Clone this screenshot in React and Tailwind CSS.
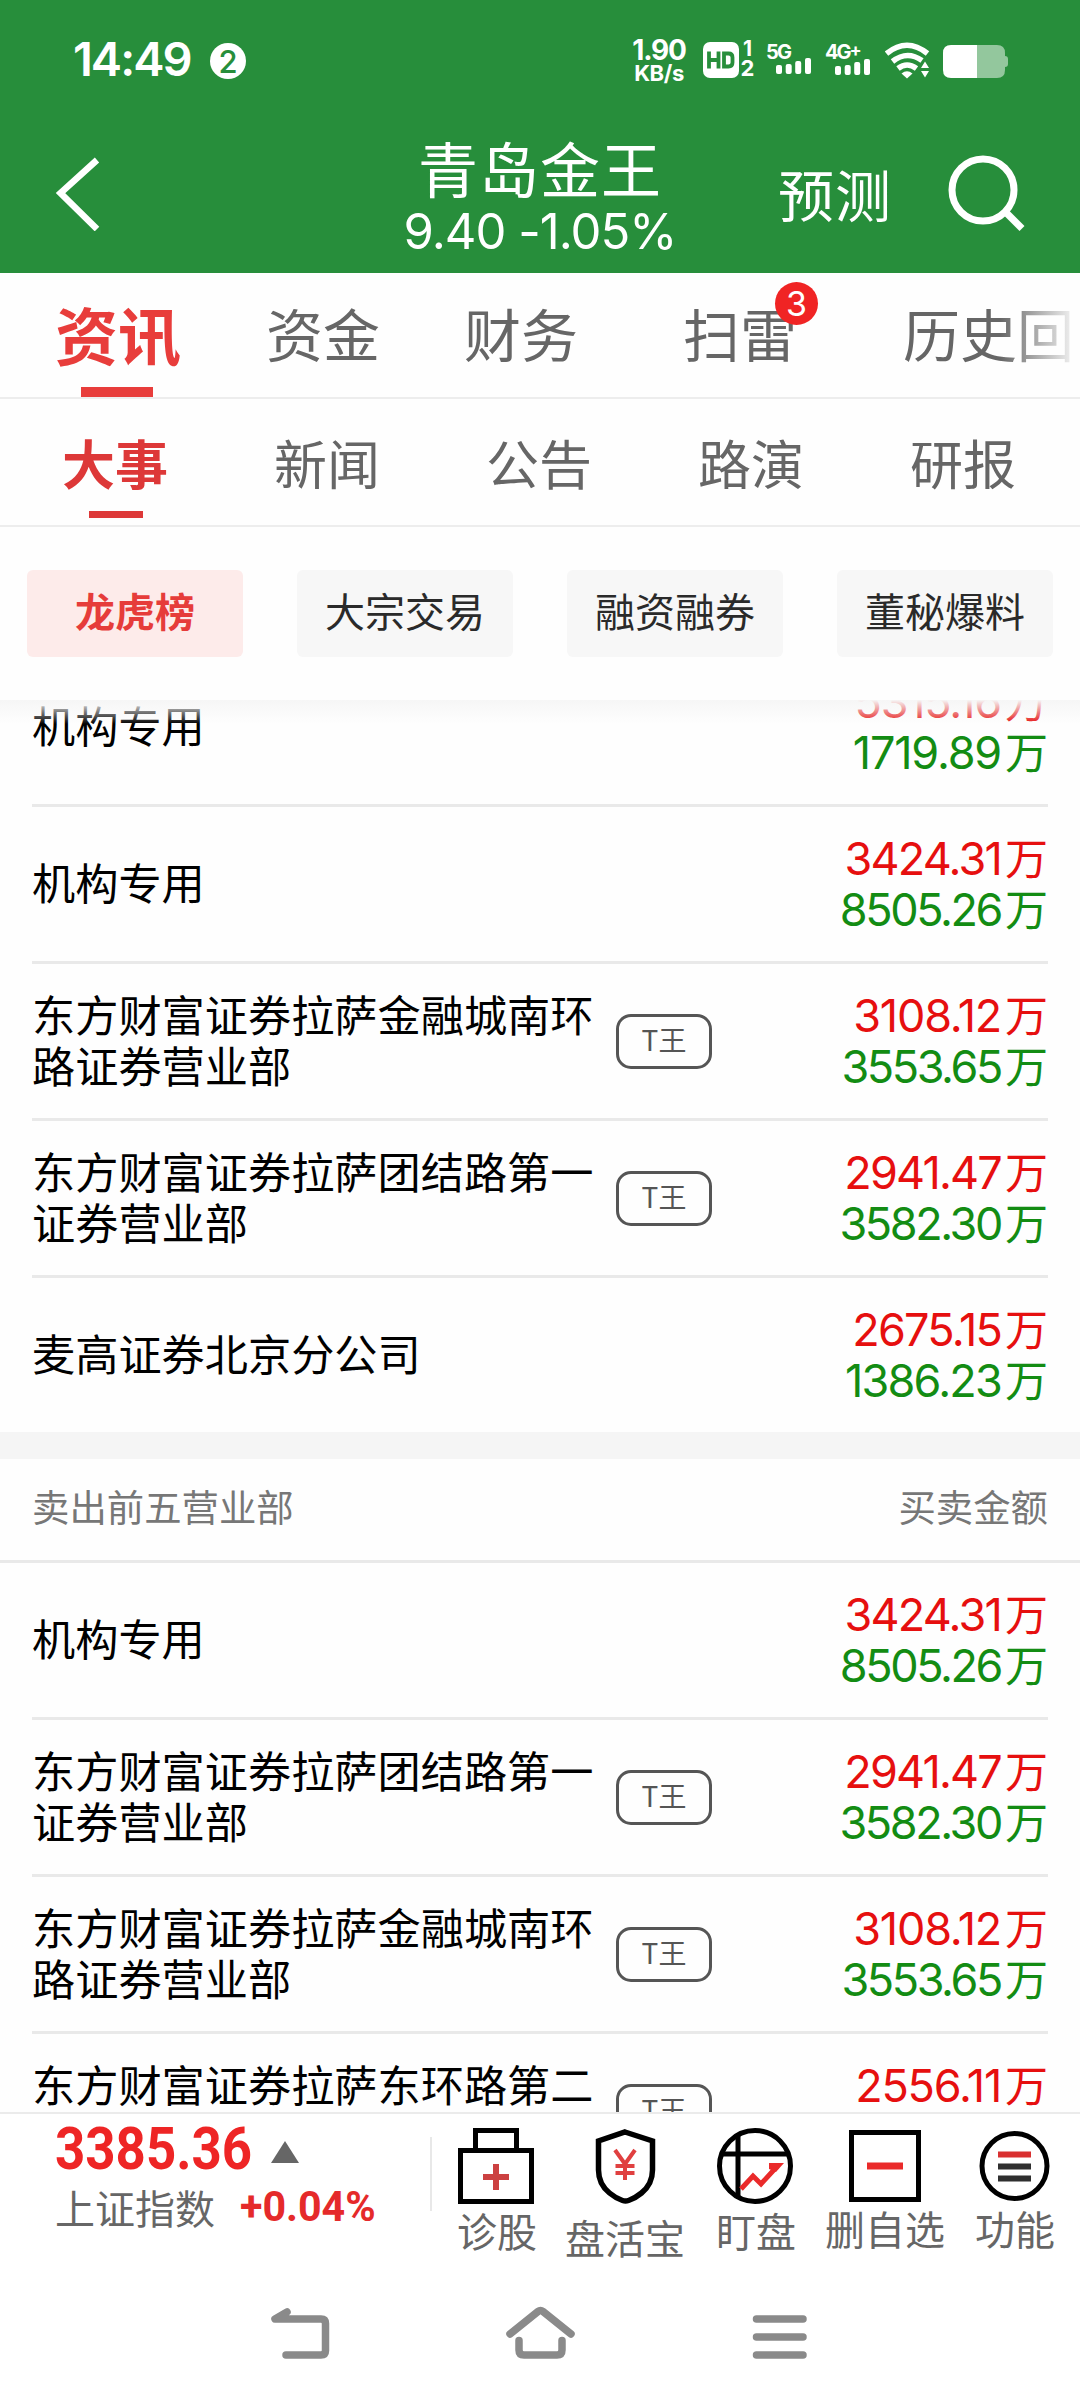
import { useState } from "react";

const mainTabs = [
  { name: "资讯", style: "w-[127px]" },
  { name: "资金", style: "ml-[84px]" },
  { name: "财务", style: "ml-[84px]" },
  { name: "扫雷", style: "ml-[105px]", badge: 3 },
  { name: "历史回", style: "ml-[106px]" },
];
const subTabs = ["大事", "新闻", "公告", "路演", "研报"];
const filters = ["龙虎榜", "大宗交易", "融资融券", "董秘爆料"];

const buyList = [
  { name: "机构专用", buy: "5315.16", sell: "1719.89" },
  { name: "机构专用", buy: "3424.31", sell: "8505.26" },
  { name: "东方财富证券拉萨金融城南环路证券营业部", tag: "T王", buy: "3108.12", sell: "3553.65" },
  { name: "东方财富证券拉萨团结路第一证券营业部", tag: "T王", buy: "2941.47", sell: "3582.30" },
  { name: "麦高证券北京分公司", buy: "2675.15", sell: "1386.23" },
];
const sellList = [
  { name: "机构专用", buy: "3424.31", sell: "8505.26" },
  { name: "东方财富证券拉萨团结路第一证券营业部", tag: "T王", buy: "2941.47", sell: "3582.30" },
  { name: "东方财富证券拉萨金融城南环路证券营业部", tag: "T王", buy: "3108.12", sell: "3553.65" },
  { name: "东方财富证券拉萨东环路第二证券营业部", tag: "T王", buy: "2556.11", sell: "2482.07" },
];

const Signal = () => (
  <svg width="36" height="16" viewBox="0 0 36 16" fill="currentColor">
    <rect x="0" y="7" width="6" height="9" rx="2" />
    <rect x="9.7" y="6" width="6" height="10" rx="2" />
    <rect x="19.2" y="3" width="6" height="13" rx="2" />
    <rect x="29" y="0" width="6" height="16" rx="2" />
  </svg>
);

const StatusBar = () => (
  <div className="flex h-[118px] items-start pl-[73px] font-['Inter'] text-white">
    <span className="mt-[30px] w-[121px] text-[47px] leading-[58px] font-semibold tracking-[-2px]">14:49</span>
    <span className="mt-[43px] ml-[16px] flex h-[36px] w-[36px] items-center justify-center rounded-full bg-white text-[31px] leading-none font-medium text-[#278e3b]">
      2
    </span>
    <div className="mt-[38px] ml-[384px] w-[58px] text-center font-bold">
      <div className="text-[28px] leading-[24px] tracking-[-1.2px]">1.90</div>
      <div className="text-[22px] leading-[22px] tracking-[-0.4px]">KB/s</div>
    </div>
    <svg className="mt-[42px] ml-[15px]" width="36" height="36" viewBox="0 0 36 36">
      <rect width="36" height="36" rx="7" fill="#fff" />
      <g fill="none" stroke="#278e3b" strokeWidth="3.8">
        <path d="M6 9.500v17M15.500 9.500v17M6 18h9.500M21 11.500h4.500q4 0 4 4v5q0 4-4 4h-4.500z" />
      </g>
    </svg>
    <div className="mt-[38px] ml-[1px] w-[15px] text-center text-[21px] leading-[21px] font-bold">
      <div>1</div>
      <div className="-mt-[1px] text-[22px]">2</div>
    </div>
    <div className="mt-[43px] ml-[11px] w-[45px] text-[20px] leading-[18px] font-bold tracking-[-1.7px]">
      5G
      <div className="-mt-[3px] ml-[10px]"><Signal /></div>
    </div>
    <div className="mt-[43px] ml-[14px] w-[45px] text-[20px] leading-[18px] font-bold tracking-[-2px] whitespace-nowrap">
      4G<span className="relative -top-[3px] text-[18px]">+</span>
      <div className="-mt-[3px] ml-[10px]"><Signal /></div>
    </div>
    <svg className="mt-[42px] ml-[15px]" width="46" height="38" viewBox="0 0 46 38" fill="none" stroke="#fff" strokeWidth="5.500">
      <path d="M1.500 11.500q20.500-16.500 41 0M7.500 19.500q14.500-11.500 29.500-1M13 26.500q9-7 18.500 0" />
      <path d="M16.500 31.500q5.500-4.500 11 0l-5.500 5z" fill="#fff" stroke="none" />
      <path d="M36 26l4-6.500 4 6.500zM36 29l4 6.500 4-6.500z" fill="#fff" stroke="none" />
    </svg>
    <svg className="mt-[45px] ml-[12px]" width="67" height="33" viewBox="0 0 67 33" fill="#fff">
      <path d="M34 0h20q8 0 8 8v3q3 0 3 3v5q0 3-3 3v3q0 8-8 8h-20z" opacity="0.5" />
      <path d="M34 0h-26q-8 0-8 8v17q0 8 8 8h26z" />
    </svg>
  </div>
);

const Header = () => (
  <div className="flex h-[155px] items-start text-white">
    <svg className="mt-[37px] ml-[52px]" width="52" height="76" viewBox="0 0 52 76" fill="none" stroke="#fff" strokeWidth="6.500">
      <path d="M45 5L8.500 38L45 74" />
    </svg>
    <div className="ml-[298px] mt-[16px] w-[276px] text-center whitespace-nowrap">
      <div className="text-[60px] leading-[66px] tracking-[1px]">青岛金王</div>
      <div className="mt-[8px] font-['Inter'] text-[49px] leading-[48px] tracking-[-1px]">9.40 -1.05%</div>
    </div>
    <div className="mt-[40px] ml-[100px] text-[56px] leading-[70px] tracking-[1px]">预测</div>
    <svg className="mt-[36px] ml-[56px]" width="82" height="82" viewBox="0 0 82 82" fill="none" stroke="#fff" strokeWidth="7">
      <circle cx="35" cy="36" r="31" />
      <path d="M56.500 57L74 74.500" />
    </svg>
  </div>
);

const Amount = ({ value, color }) => {
  // the "1" is a narrow glyph, so values with more of them are set looser
  const ones = value.split("1").length - 1;
  return (
    <div className={`h-[51px] whitespace-nowrap ${color}`}>
      <span
        className="font-['Inter'] text-[45px] leading-[51px]"
        style={{ letterSpacing: `${-2.4 + ones * 0.6}px` }}
      >
        {value}
      </span>
      <span className="ml-[4px] text-[43px] leading-[51px]">万</span>
    </div>
  );
};

const Row = ({ item, last }) => (
  <div
    className={`mx-[32px] flex shrink-0 items-center border-[#e9e9e9] ${
      last ? "h-[154px]" : "h-[157px] border-b-[3px]"
    }`}
  >
    <div className="w-[563px] shrink-0 pb-[5px] text-[43.2px] leading-[51px] break-all text-black">{item.name}</div>
    {item.tag && (
      <span className="ml-[21px] flex h-[55px] w-[96px] items-center justify-center rounded-[15px] border-[3px] border-[#555] pb-[5px] text-[28px] leading-none text-[#555]">
        {item.tag}
      </span>
    )}
    <div className="ml-auto flex flex-col items-end pb-[4px]">
      <Amount value={item.buy} color="text-[#e60f0f]" />
      <Amount value={item.sell} color="text-[#138c13]" />
    </div>
  </div>
);

const BottomBar = () => (
  <div className="flex h-[152px] items-start border-t-2 border-[#ebebeb] bg-white text-[40px] leading-[44px] text-[#666]">
    <div className="w-[375px] pl-[55px]">
      <div className="mt-[9px] flex h-[52px] items-center">
        <span className="inline-block w-[216px] origin-left scale-x-[0.88] font-['Roboto'] text-[60px] leading-[52px] font-bold text-[#ee2525]">
          3385.36
        </span>
        <svg className="mt-[6px]" width="28" height="22" viewBox="0 0 28 22" fill="#666">
          <path d="M14 0L28 22H0z" />
        </svg>
      </div>
      <div className="mt-[9px] flex h-[46px] items-center whitespace-nowrap">
        <span className="text-[40px]">上证指数</span>
        <span className="ml-[25px] inline-block origin-left scale-x-[0.98] font-['Roboto'] text-[42px] font-bold text-[#e52a2a]">
          +0.04%
        </span>
      </div>
    </div>
    <div className="mt-[23px] ml-[55px] h-[74px] w-[2px] bg-[#e8e8e8]" />
    <div className="mt-[14px] ml-[26px] w-[80px]">
      <svg width="76" height="76" viewBox="0 0 76 76" fill="none" stroke="#000" strokeWidth="5">
        <path d="M2.500 22.500h71v51h-71zM17.500 22.500v-20h41v20" />
        <path d="M25 49h26M38 36v26" stroke="#cc4141" strokeWidth="6" />
      </svg>
      <div className="-ml-[1px] mt-[4px]">诊股</div>
    </div>
    <div className="mt-[14px] ml-[27px] flex w-[120px] flex-col items-center">
      <svg width="62" height="76" viewBox="0 0 62 76" fill="none" stroke="#000" strokeWidth="5.500">
        <path d="M31 4L58.500 13v29q0 14-11 23-6 5-13 7.500-3 1-6 0-7-2.500-13-7.500-11-9-11-23V13z" />
        <path d="M21 22l10 14 10-14M31 36v16M21.500 38h19M21.500 45h19" stroke="#e04040" strokeWidth="4" />
      </svg>
      <div className="mt-[11px]">盘活宝</div>
    </div>
    <div className="mt-[14px] ml-[32px] w-[80px]">
      <svg width="76" height="76" viewBox="0 0 76 76" fill="none" stroke="#000" strokeWidth="5">
        <circle cx="38" cy="38" r="35.500" />
        <path d="M21 6v64M5 26h66" />
        <path d="M24 61L36 48L44 56L60 38.500" stroke="#ea2a2a" strokeWidth="5" />
        <path d="M52 35h15l-8 9-7-3z" fill="#ea2a2a" stroke="none" />
      </svg>
      <div className="-ml-[1px] mt-[4px]">盯盘</div>
    </div>
    <div className="mt-[16px] ml-[28px] flex w-[120px] flex-col items-center">
      <svg width="72" height="72" viewBox="0 0 72 72" fill="none" stroke="#000" strokeWidth="5">
        <path d="M2.500 2.500h67v67h-67z" />
        <path d="M18 36h36" stroke="#ea2a2a" strokeWidth="7" />
      </svg>
      <div className="mt-[4px]">删自选</div>
    </div>
    <div className="mt-[16px] ml-[30px] w-[80px]">
      <svg className="ml-[4px]" width="72" height="72" viewBox="0 0 72 72" fill="none" stroke="#000" strokeWidth="5">
        <circle cx="35.500" cy="36" r="32.500" />
        <path d="M19 24.500h33" stroke="#d93030" strokeWidth="6" />
        <path d="M19 36.500h33M19 48.500h33" stroke="#2f2f2f" strokeWidth="6" />
      </svg>
      <div className="mt-[4px]">功能</div>
    </div>
  </div>
);

const SystemNav = () => (
  <div className="flex h-[136px] items-start justify-between bg-white pr-[271px] pl-[269px] pt-[40px]">
    <svg width="64" height="60" viewBox="0 0 64 60" fill="none" stroke="#8a8a8a" strokeWidth="7.500" strokeLinecap="round" strokeLinejoin="round">
      <path d="M18 8L6 15H52q4.500 0 4.500 4.500V46.500q0 4.500-4.500 4.500H17" />
    </svg>
    <svg width="72" height="60" viewBox="0 0 72 60" fill="none" stroke="#8a8a8a" strokeWidth="7.500" strokeLinecap="round" strokeLinejoin="round">
      <path d="M5 30L33 7.500q2.500-2 5 0L66 30M14 36.500V46q0 5 5 5h33q5 0 5-5V36.500" />
    </svg>
    <svg width="60" height="60" viewBox="0 0 60 60" stroke="#8a8a8a" strokeWidth="7.500" strokeLinecap="round">
      <path d="M7.500 15H54M7.500 33H54M7.500 51H54" />
    </svg>
  </div>
);

export default function App() {
  const [tab, setTab] = useState("资讯");
  const [subTab, setSubTab] = useState("大事");
  const [filter, setFilter] = useState("龙虎榜");

  return (
    <div className="flex h-[2400px] w-[1080px] flex-col overflow-hidden bg-[#fefefe] font-['Noto_Sans_CJK_SC',sans-serif]">
      <div className="h-[273px] shrink-0 bg-[#278e3b]">
        <StatusBar />
        <Header />
      </div>

      {/* main tabs */}
      <div className="relative flex h-[126px] shrink-0 overflow-hidden border-b-2 border-[#ededed] pl-[55px]">
        {mainTabs.map((t) => (
          <button
            key={t.name}
            onClick={() => setTab(t.name)}
            className={`relative shrink-0 text-left whitespace-nowrap ${t.style} ${
              tab === t.name ? "text-[63px] font-bold text-[#e83d3b]" : "text-[57px] text-[#666]"
            }`}
          >
            <span className="relative -top-[2px]">{t.name}</span>
            {t.badge && (
              <span className="absolute top-[9px] left-[92px] flex h-[43px] w-[43px] items-center justify-center rounded-full bg-[#f02424] font-['Inter'] text-[34px] leading-none text-white">
                {t.badge}
              </span>
            )}
            {tab === t.name && <span className="absolute bottom-0 left-[26px] h-[10px] w-[72px] bg-[#e83d3b]" />}
          </button>
        ))}
        <div className="absolute top-0 right-0 h-[124px] w-[80px] bg-gradient-to-r from-transparent to-[#fefefe]" />
      </div>

      {/* sub tabs */}
      <div className="grid h-[128px] shrink-0 grid-cols-5 border-b-2 border-[#ededed] px-[10px]">
        {subTabs.map((t) => (
          <button
            key={t}
            onClick={() => setSubTab(t)}
            className={`relative text-[53px] ${subTab === t ? "font-bold text-[#dd3838]" : "text-[#666]"}`}
          >
            <span className="relative top-[1px] -left-[1px]">{t}</span>
            {subTab === t && (
              <span className="absolute bottom-[7px] left-[79px] h-[7px] w-[54px] bg-[#dd3838]" />
            )}
          </button>
        ))}
      </div>

      <div className="flex h-[173px] shrink-0 gap-[54px] px-[27px] pt-[43px]">
        {filters.map((f) => (
          <button
            key={f}
            onClick={() => setFilter(f)}
            className={`h-[87px] w-[216px] rounded-[6px] pb-[6px] text-[40px] leading-[81px] ${
              filter === f ? "bg-[#fdebea] font-bold text-[#e63c3a]" : "bg-[#f7f7f7] text-[#2a2a2a]"
            }`}
          >
            {f}
          </button>
        ))}
      </div>

      {/* scrolled list */}
      <div className="relative h-[1412px] shrink-0 overflow-hidden">
        <div className="-mt-[50px] flex flex-col">
          {buyList.map((item, i) => (
            <Row key={i} item={item} last={i === buyList.length - 1} />
          ))}
          <div className="h-[27px] bg-[#f5f5f5]" />
          <div className="flex h-[104px] items-center justify-between border-b-[3px] border-[#e9e9e9] px-[32px] pb-[7px] text-[37.400px] text-[#777]">
            <span>卖出前五营业部</span>
            <span>买卖金额</span>
          </div>
          {sellList.map((item, i) => (
            <Row key={i} item={item} />
          ))}
        </div>
        <div className="absolute top-0 left-0 h-[24px] w-full bg-gradient-to-b from-[#f6f6f6] to-transparent" />
      </div>

      <BottomBar />
      <SystemNav />
    </div>
  );
}
